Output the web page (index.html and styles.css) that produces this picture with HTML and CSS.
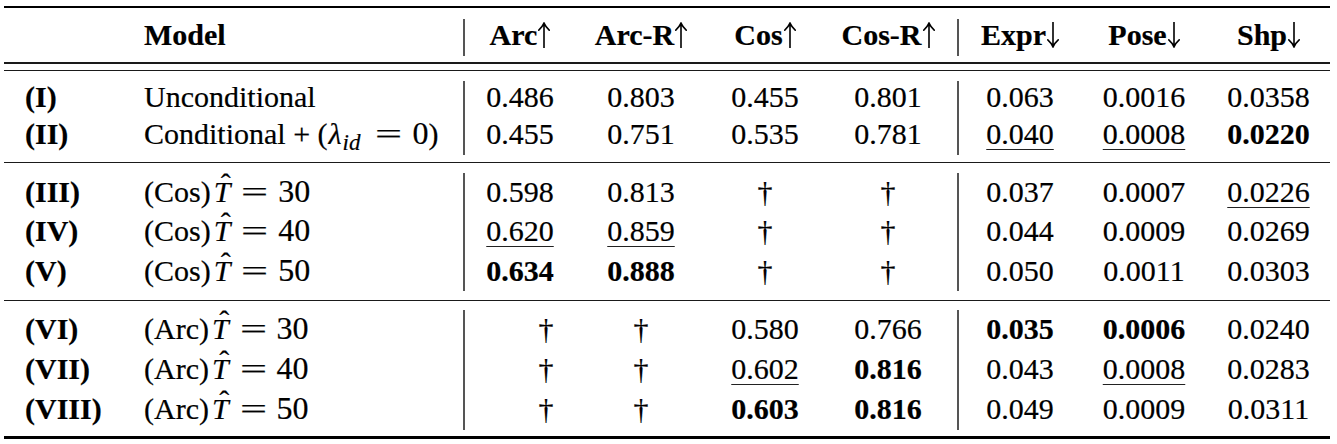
FILE: index.html
```html
<!DOCTYPE html>
<html>
<head>
<meta charset="utf-8">
<link rel="stylesheet" href="styles.css">
</head>
<body>
<div class="table">
  <div class="rule heavy"></div>

  <div class="grid head">
    <div class="vbar v1"></div><div class="vbar v2"></div>
    <div class="c lbl"></div>
    <div class="c model">Model</div>
    <div class="c">Arc<svg class="arr" viewBox="0 0 12 26" aria-label="↑"><path d="M6 1.2V26M0.8 8.2Q4.2 5.2 6 1.2Q7.8 5.2 11.2 8.2"/></svg></div>
    <div class="c">Arc-R<svg class="arr" viewBox="0 0 12 26" aria-label="↑"><path d="M6 1.2V26M0.8 8.2Q4.2 5.2 6 1.2Q7.8 5.2 11.2 8.2"/></svg></div>
    <div class="c">Cos<svg class="arr" viewBox="0 0 12 26" aria-label="↑"><path d="M6 1.2V26M0.8 8.2Q4.2 5.2 6 1.2Q7.8 5.2 11.2 8.2"/></svg></div>
    <div class="c">Cos-R<svg class="arr" viewBox="0 0 12 26" aria-label="↑"><path d="M6 1.2V26M0.8 8.2Q4.2 5.2 6 1.2Q7.8 5.2 11.2 8.2"/></svg></div>
    <div class="c">Expr<svg class="arr" viewBox="0 0 12 26" aria-label="↓"><path d="M6 0V24.8M0.8 17.8Q4.2 20.8 6 24.8Q7.8 20.8 11.2 17.8"/></svg></div>
    <div class="c">Pose<svg class="arr" viewBox="0 0 12 26" aria-label="↓"><path d="M6 0V24.8M0.8 17.8Q4.2 20.8 6 24.8Q7.8 20.8 11.2 17.8"/></svg></div>
    <div class="c">Shp<svg class="arr" viewBox="0 0 12 26" aria-label="↓"><path d="M6 0V24.8M0.8 17.8Q4.2 20.8 6 24.8Q7.8 20.8 11.2 17.8"/></svg></div>
  </div>

  <div class="rule thin"></div>
  <div class="rule thin second"></div>

  <div class="grid sec s1">
    <div class="vbar v1"></div><div class="vbar v2"></div>
    <div class="c lbl">(I)</div><div class="c model">Unconditional</div>
    <div class="c">0.486</div><div class="c">0.803</div><div class="c">0.455</div><div class="c">0.801</div>
    <div class="c">0.063</div><div class="c">0.0016</div><div class="c">0.0358</div>

    <div class="c lbl">(II)</div><div class="c model">Conditional + (<i class="mi">λ</i><span class="sub">id</span><span class="rel">=</span><span class="mn">0</span>)</div>
    <div class="c">0.455</div><div class="c">0.751</div><div class="c">0.535</div><div class="c">0.781</div>
    <div class="c"><span class="ul">0.040</span></div><div class="c"><span class="ul">0.0008</span></div><div class="c"><b>0.0220</b></div>
  </div>

  <div class="rule thin"></div>

  <div class="grid sec s2">
    <div class="vbar v1"></div><div class="vbar v2"></div>
    <div class="c lbl">(III)</div><div class="c model">(Cos)<span class="hat">T</span><span class="rel">=</span><span class="mn">30</span></div>
    <div class="c">0.598</div><div class="c">0.813</div><div class="c">†</div><div class="c">†</div>
    <div class="c">0.037</div><div class="c">0.0007</div><div class="c"><span class="ul">0.0226</span></div>

    <div class="c lbl">(IV)</div><div class="c model">(Cos)<span class="hat">T</span><span class="rel">=</span><span class="mn">40</span></div>
    <div class="c"><span class="ul">0.620</span></div><div class="c"><span class="ul">0.859</span></div><div class="c">†</div><div class="c">†</div>
    <div class="c">0.044</div><div class="c">0.0009</div><div class="c">0.0269</div>

    <div class="c lbl">(V)</div><div class="c model">(Cos)<span class="hat">T</span><span class="rel">=</span><span class="mn">50</span></div>
    <div class="c"><b>0.634</b></div><div class="c"><b>0.888</b></div><div class="c">†</div><div class="c">†</div>
    <div class="c">0.050</div><div class="c">0.0011</div><div class="c">0.0303</div>
  </div>

  <div class="rule thin"></div>

  <div class="grid sec s3">
    <div class="vbar v1"></div><div class="vbar v2"></div>
    <div class="c lbl">(VI)</div><div class="c model">(Arc)<span class="hat">T</span><span class="rel">=</span><span class="mn">30</span></div>
    <div class="c dag-off">†</div><div class="c">†</div><div class="c">0.580</div><div class="c">0.766</div>
    <div class="c"><b>0.035</b></div><div class="c"><b>0.0006</b></div><div class="c">0.0240</div>

    <div class="c lbl">(VII)</div><div class="c model">(Arc)<span class="hat">T</span><span class="rel">=</span><span class="mn">40</span></div>
    <div class="c dag-off">†</div><div class="c">†</div><div class="c"><span class="ul">0.602</span></div><div class="c"><b>0.816</b></div>
    <div class="c">0.043</div><div class="c"><span class="ul">0.0008</span></div><div class="c">0.0283</div>

    <div class="c lbl">(VIII)</div><div class="c model">(Arc)<span class="hat">T</span><span class="rel">=</span><span class="mn">50</span></div>
    <div class="c dag-off">†</div><div class="c">†</div><div class="c"><b>0.603</b></div><div class="c"><b>0.816</b></div>
    <div class="c">0.049</div><div class="c">0.0009</div><div class="c">0.0311</div>
  </div>

  <div class="rule heavy bottom"></div>
</div>
</body>
</html>
```

FILE: styles.css
```css
html, body {
  margin: 0;
  padding: 0;
  background: #ffffff;
}

body {
  font-family: "Liberation Serif", "Times New Roman", serif;
  font-size: 30px;
  color: #000;
  -webkit-text-stroke: 0.2px #000;
}

.table {
  width: 1326px;
  margin: 6px 0 0 4px;
}

.rule {
  background: #1a1a1a;
}

.rule.heavy {
  height: 2.4px;
  background: #000;
}

.rule.thin {
  height: 1.5px;
}

.rule.thin.second {
  margin-top: 6px;
}

.grid {
  display: grid;
  grid-template-columns: 140px 319px 2px 110px 132px 116px 130px 6px 122px 126px 123px;
}

.head {
  grid-template-rows: 37px;
  margin: 11px 0 6px;
  font-weight: bold;
  line-height: 31.5px;
}

.s1 {
  grid-template-rows: repeat(2, 37px);
  padding: 10px 0 6.5px;
  line-height: 31.5px;
}

.s2 {
  grid-template-rows: repeat(3, 39.5px);
  padding: 9.3px 0 8.5px;
  line-height: 37px;
}

.s3 {
  grid-template-rows: repeat(3, 40px);
  padding: 9.2px 0 6px;
  line-height: 38px;
}

.vbar {
  grid-row: 1 / -1;
  width: 2px;
  background: #555;
}

.vbar.v1 {
  grid-column: 3;
}

.vbar.v2 {
  grid-column: 8;
  justify-self: end;
}

.c {
  text-align: center;
  white-space: nowrap;
}

.c.lbl {
  text-align: left;
  padding-left: 21px;
  font-weight: bold;
}

.c.model {
  text-align: left;
}

.c.dag-off {
  padding-left: 52px;
}

.arr {
  width: 12px;
  height: 26px;
  vertical-align: -3px;
  margin-left: 1px;
  fill: none;
  stroke: #000;
  stroke-width: 1.6;
  stroke-linecap: round;
}

.ul {
  text-decoration: underline;
  text-decoration-thickness: 1.4px;
  text-underline-offset: 5px;
  text-decoration-color: #222;
}

.mi {
  font-style: italic;
  margin-left: 1px;
}

.sub {
  font-style: italic;
  font-size: 23px;
  position: relative;
  top: 6px;
  line-height: 0;
  margin: 0 4px 0 1px;
}

.rel {
  display: inline-block;
  transform: scaleX(1.6);
  margin: 0 15px 0 16px;
}

.mn {
  font-size: 32px;
  line-height: 0;
}

.hat {
  position: relative;
  font-style: italic;
  margin-left: 3px;
}

.hat::after {
  content: "\02C6";
  position: absolute;
  left: 0.24em;
  top: -0.2em;
  line-height: 1;
  font-style: normal;
}
```
